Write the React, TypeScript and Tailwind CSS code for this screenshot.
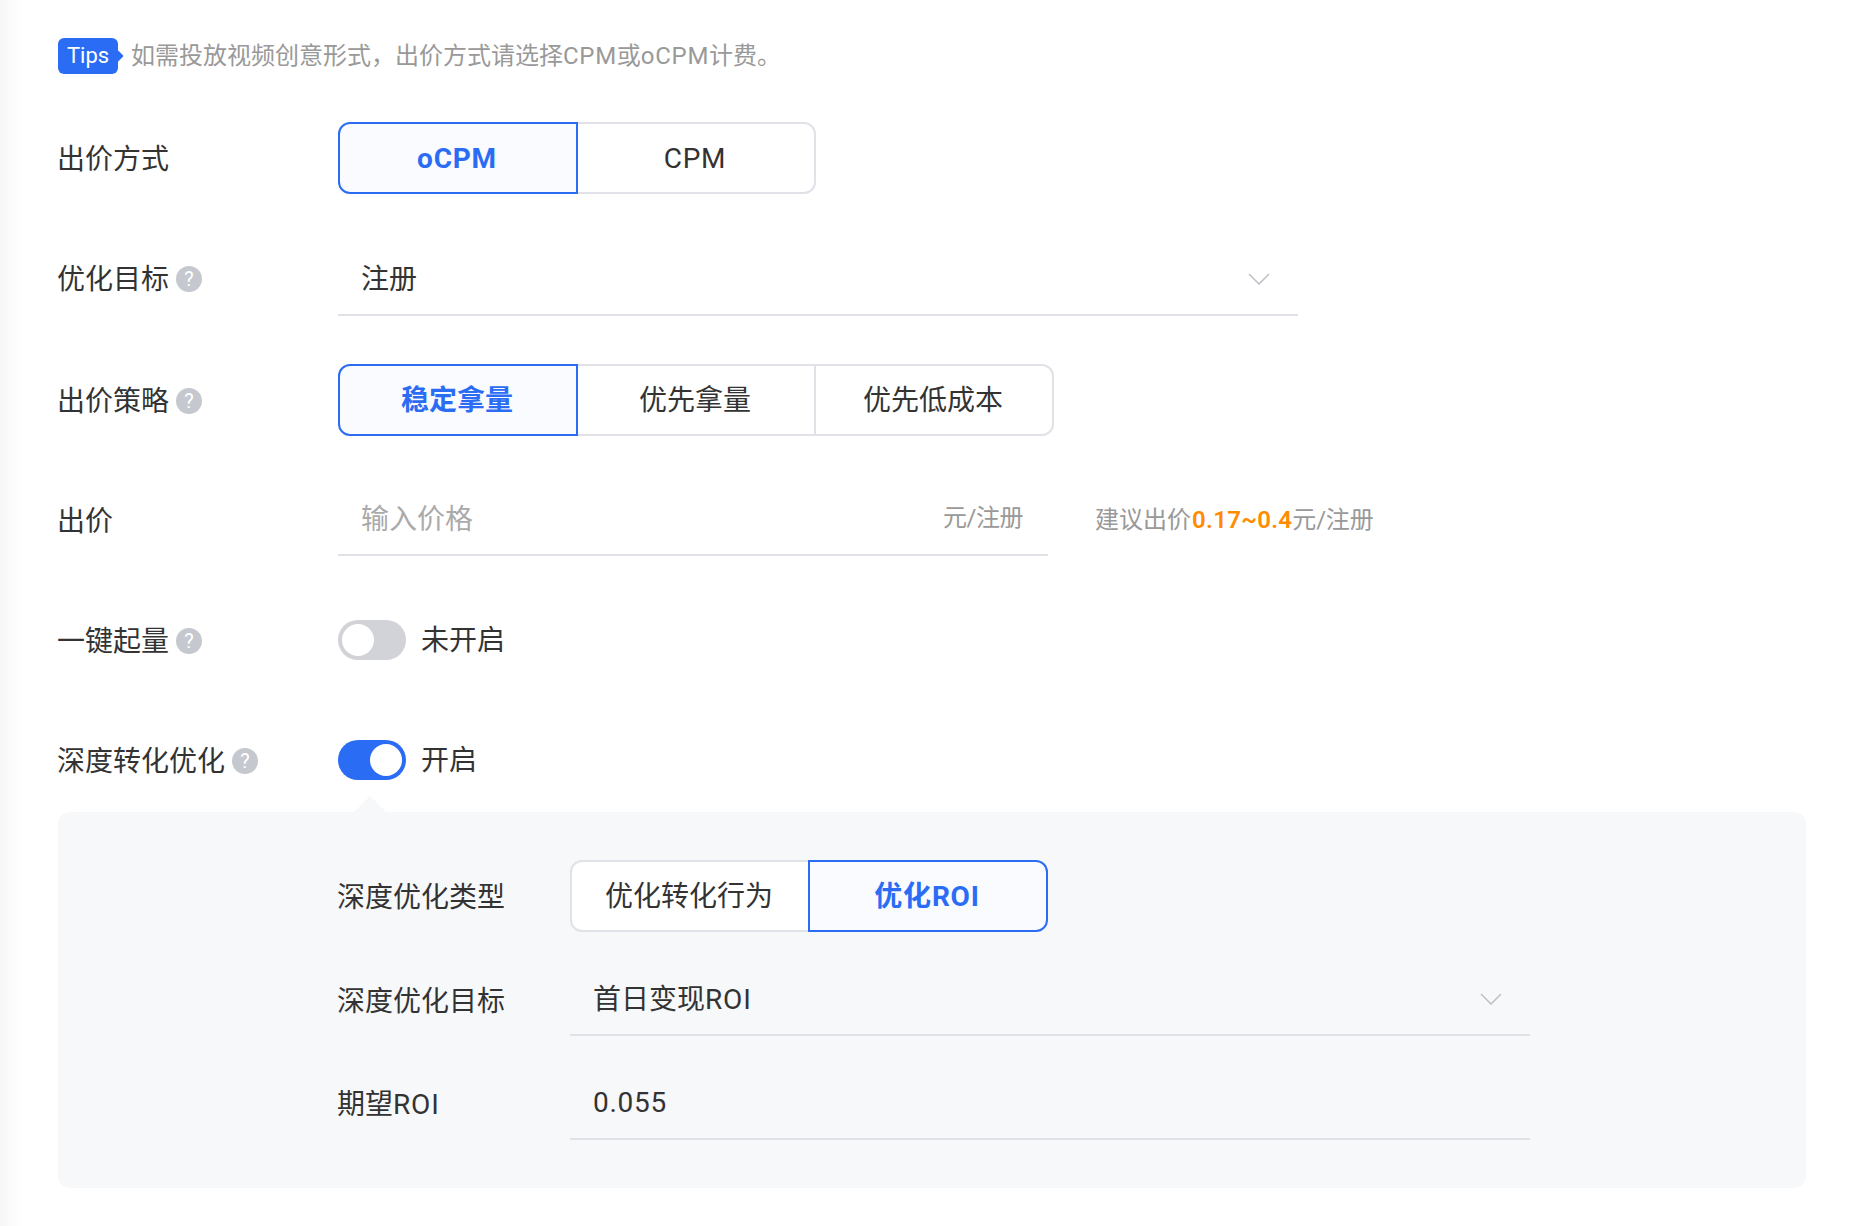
function Help() {
  return (
    <span className="ml-[7px] flex h-[26px] w-[26px] shrink-0 items-center justify-center rounded-full bg-[#c5c8ce] text-[20px] leading-none text-white">
      ?
    </span>
  );
}

function Label({
  text,
  help,
  width = "w-[280px]",
  offset = "pt-[2px]",
}: {
  text: string;
  help?: boolean;
  width?: string;
  offset?: string;
}) {
  return (
    <div className={`flex shrink-0 items-center text-[28px] leading-[40px] text-[#333] ${width} ${offset}`}>
      <span className="-ml-[1px] pt-[2px]">{text}</span>
      {help && <Help />}
    </div>
  );
}

function Segments({ items, active }: { items: string[]; active: number }) {
  return (
    <div className="flex">
      {items.map((item, i) => (
        <div
          key={item}
          className={`relative flex h-[72px] w-[240px] items-center justify-center border-2 pr-[2px] pt-[2px] text-[28px] ${i > 0 ? "-ml-[2px]" : ""} ${
            i === 0 ? "rounded-l-[12px]" : ""
          } ${i === items.length - 1 ? "rounded-r-[12px]" : ""} ${
            i === active
              ? "z-10 border-[#2a6df4] bg-[#fafbff] font-bold text-[#2a6df4]"
              : "border-[#e1e2e8] bg-white text-[#333]"
          } ${/[A-Z]/.test(item) ? "tracking-[0.8px]" : ""}`}
        >
          {item}
        </div>
      ))}
    </div>
  );
}

function Chevron() {
  return (
    <svg width="22" height="12" viewBox="0 0 22 12" fill="none" className="shrink-0">
      <path d="M1 1l10 10L21 1" stroke="#bfc2c9" strokeWidth="1.6" />
    </svg>
  );
}

function Select({ value, latin }: { value: string; latin?: string }) {
  return (
    <div className="flex h-[72px] w-[960px] items-center justify-between border-b-2 border-[#e1e2e8] pl-[23px] pr-[28px] text-[28px] text-[#333]">
      <span className="pt-[2px]">
        {value}
        {latin && <span className="tracking-[0.8px]">{latin}</span>}
      </span>
      <Chevron />
    </div>
  );
}

function Toggle({ on, text }: { on: boolean; text: string }) {
  return (
    <div className="flex items-center">
      <div
        className={`flex h-[40px] w-[68px] items-center rounded-full px-[4px] ${
          on ? "justify-end bg-[#2a6df4]" : "justify-start bg-[#d2d3d8]"
        }`}
      >
        <div className="h-[32px] w-[32px] rounded-full bg-white" />
      </div>
      <span className="ml-[15px] pt-[2px] text-[28px] text-[#333]">{text}</span>
    </div>
  );
}

export default function App() {
  return (
    <div className="relative h-[1226px] w-[1856px] overflow-hidden bg-white font-['Roboto','Noto_Sans_CJK_SC',sans-serif]">
      {/* faint shade on the left edge */}
      <div className="pointer-events-none absolute inset-y-0 left-0 w-[24px] bg-gradient-to-r from-[#f7f7f7] to-white" />

      <div className="relative flex flex-col pl-[58px] pr-[50px] pt-[38px]">
        <div className="flex h-[36px] items-center">
          <div className="relative flex h-[36px] w-[60px] items-center justify-center rounded-[6px] bg-[#2a6df4] pb-[2px] text-[22px] text-white">
            Tips
            <span className="absolute -right-[4px] top-1/2 h-[8px] w-[8px] -translate-y-1/2 rotate-45 rounded-[1px] bg-[#2a6df4]" />
          </div>
          <span className="ml-[13px] text-[24px] text-[#999]">
            如需投放视频创意形式，出价方式请选择<span className="tracking-[0.7px]">CPM</span>或
            <span className="tracking-[0.7px]">oCPM</span>计费。
          </span>
        </div>

        <div className="mt-[48px] flex h-[72px] items-center">
          <Label text="出价方式" />
          <Segments items={["oCPM", "CPM"]} active={0} />
        </div>

        <div className="mt-[50px] flex h-[72px] items-center">
          <Label text="优化目标" help offset="pb-[2px]" />
          <Select value="注册" />
        </div>

        <div className="mt-[48px] flex h-[72px] items-center">
          <Label text="出价策略" help />
          <Segments items={["稳定拿量", "优先拿量", "优先低成本"]} active={0} />
        </div>

        <div className="mt-[48px] flex h-[72px] items-center">
          <Label text="出价" />
          <div className="flex h-[72px] w-[710px] items-center justify-between border-b-2 border-[#e1e2e8] pl-[23px] pr-[25px] pt-[2px]">
            <span className="text-[28px] text-[#aaa]">输入价格</span>
            <span className="pb-[4px] text-[24px] tracking-[-0.5px] text-[#999]">元/注册</span>
          </div>
          <div className="ml-[47px] text-[24px] text-[#999]">
            建议出价<span className="ml-[1px] font-semibold tracking-[0.3px] text-[#ff8c00]">0.17~0.4</span>
            <span className="tracking-[-0.2px]">元/注册</span>
          </div>
        </div>

        <div className="mt-[48px] flex h-[72px] items-center">
          <Label text="一键起量" help />
          <Toggle on={false} text="未开启" />
        </div>

        <div className="mt-[48px] flex h-[72px] items-center">
          <Label text="深度转化优化" help />
          <Toggle on text="开启" />
        </div>

        <div className="relative mt-[16px] flex flex-col gap-[32px] rounded-[12px] bg-[#f7f8fa] pb-[48px] pl-[280px] pt-[48px]">
          <span className="absolute -top-[16px] left-[296px] h-0 w-0 border-x-[16px] border-b-[16px] border-x-transparent border-b-[#f7f8fa]" />
          <div className="flex h-[72px] items-center">
            <Label text="深度优化类型" width="w-[232px]" />
            <Segments items={["优化转化行为", "优化ROI"]} active={1} />
          </div>
          <div className="flex h-[72px] items-center">
            <Label text="深度优化目标" width="w-[232px]" />
            <Select value="首日变现" latin="ROI" />
          </div>
          <div className="flex h-[72px] items-center">
            <div className="w-[232px] shrink-0 pt-[2px] text-[28px] leading-[40px] text-[#333]">
              <span className="-ml-[1px]">
                期望<span className="tracking-[0.8px]">ROI</span>
              </span>
            </div>
            <div className="flex h-[72px] w-[960px] items-center border-b-2 border-[#e1e2e8] pl-[23px] text-[28px] tracking-[0.7px] text-[#333]">
              0.055
            </div>
          </div>
        </div>
      </div>
    </div>
  );
}
